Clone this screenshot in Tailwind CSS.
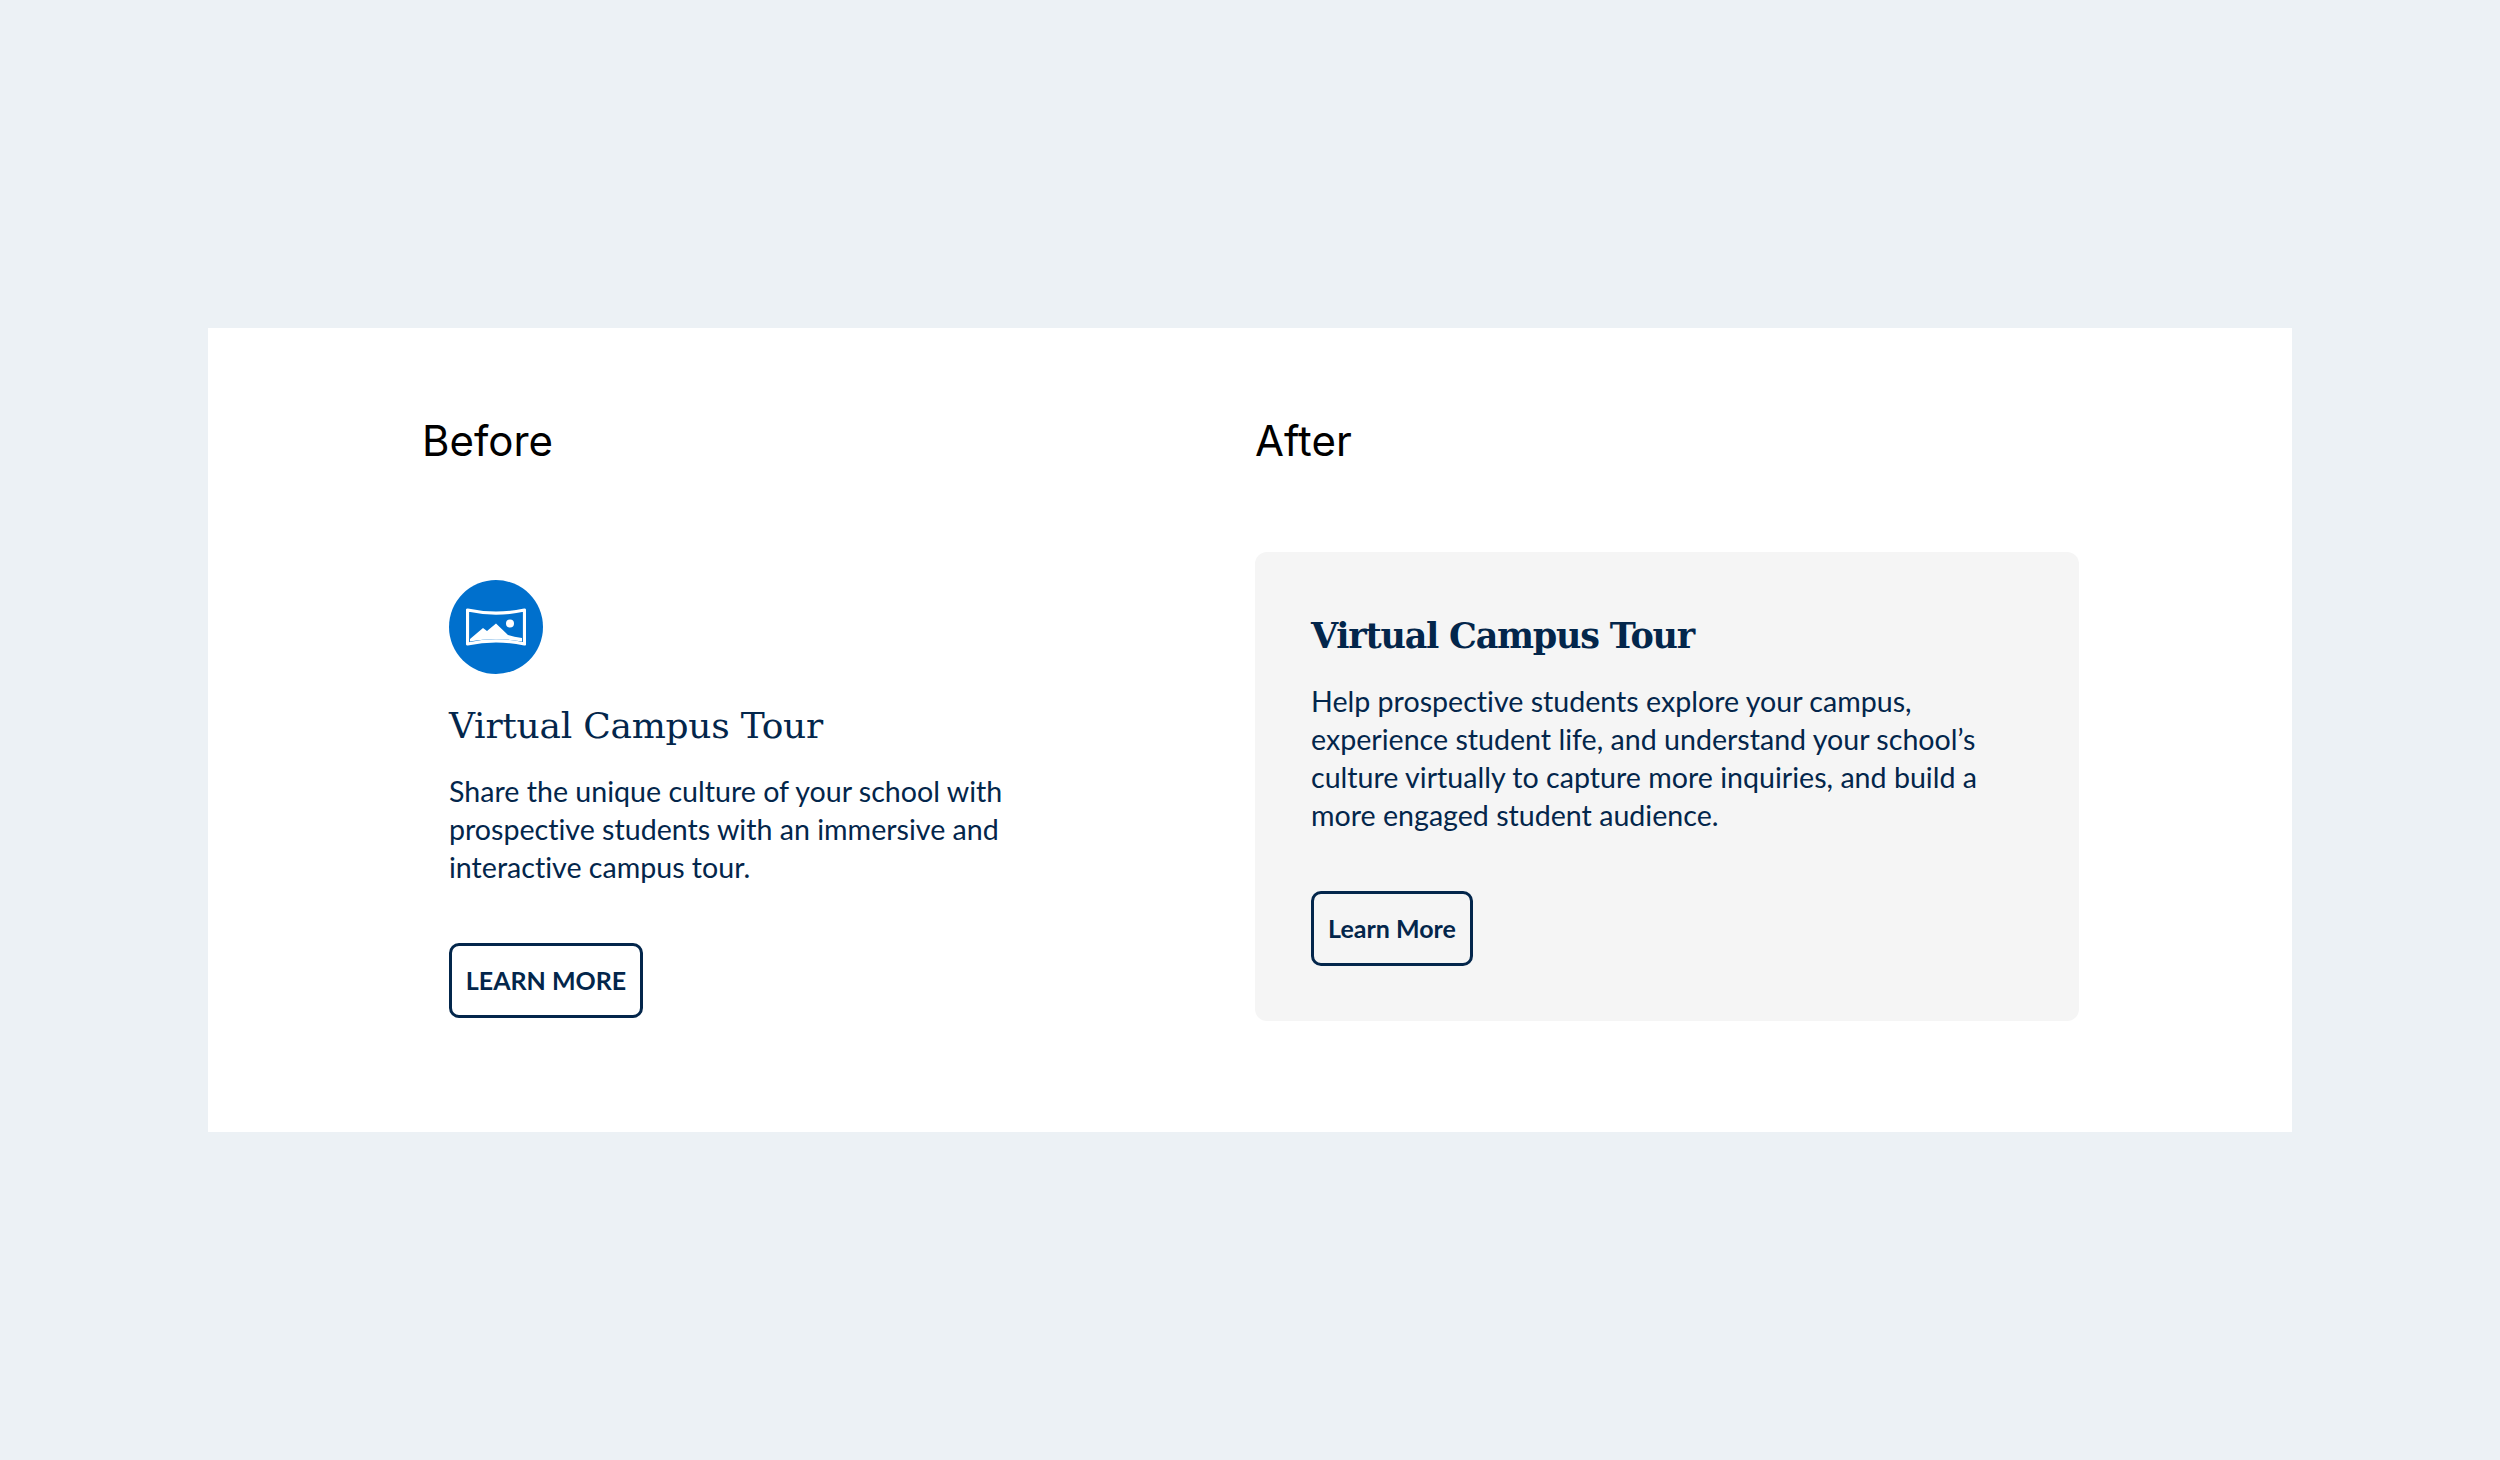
<!DOCTYPE html>
<html lang="en">
<head>
  <meta charset="UTF-8" />
  <title>Before and After</title>
  <script src="https://cdn.jsdelivr.net/npm/@tailwindcss/browser@4"></script>
</head>
<body class="bg-[#ecf1f5] h-[1460px] overflow-hidden font-['Lato',sans-serif] text-[#03264b] [font-variant-ligatures:none]">
  <main class="mt-[328px] ml-[208px] w-[2084px] h-[804px] bg-white pl-[214px] pt-[88px] grid grid-cols-[833px_824px]">

    <!-- Before -->
    <section>
      <h2 class="font-['Inter',sans-serif] text-[42px] leading-[50px] text-black">Before</h2>
      <div class="ml-[27px] mt-[114px]">
        <div class="w-[94px] h-[94px] rounded-full bg-[#0070cd] flex items-center justify-center">
          <svg class="w-[60px] h-[38px]" viewBox="0 0 60 38" fill="none">
            <path d="M1.5 2C20 6 40 6 58.5 2V36C40 32 20 32 1.5 36Z" stroke="white" stroke-width="3.200" stroke-linejoin="round"/>
            <path d="M4 31L17 20L21 23L30 15.500L42 27Q48 29 56 30V33.500C40 30.500 20 30.500 4 33.500Z" fill="white"/>
            <circle cx="44" cy="15.500" r="4" fill="white"/>
          </svg>
        </div>
        <h3 class="mt-[29px] font-['DejaVu_Serif',serif] text-[36px] tracking-[-0.25px] leading-[46px]">Virtual Campus Tour</h3>
        <p class="mt-[23px] text-[28.6px] leading-[38px] w-[600px]">Share the unique culture of your school with prospective students with an immersive and interactive campus tour.</p>
        <a href="#" class="mt-[57px] inline-flex items-center h-[75px] w-[194px] justify-center border-[3px] border-[#03264b] rounded-[10px] text-[25px] font-bold">LEARN MORE</a>
      </div>
    </section>

    <!-- After -->
    <section>
      <h2 class="font-['Inter',sans-serif] text-[42px] leading-[50px] text-black">After</h2>
      <div class="mt-[86px] h-[469px] bg-[#f5f5f5] rounded-[12px] p-[56px]">
        <h3 class="mt-[5px] font-['DejaVu_Serif',serif] font-bold text-[35px] tracking-[-1.25px] leading-[46px]">Virtual Campus Tour</h3>
        <p class="mt-[23px] text-[28.6px] leading-[38px] w-[700px]">Help prospective students explore your campus, experience student life, and understand your school’s culture virtually to capture more inquiries, and build a more engaged student audience.</p>
        <a href="#" class="mt-[57px] inline-flex items-center h-[75px] w-[162px] justify-center border-[3px] border-[#03264b] rounded-[10px] text-[25px] font-bold">Learn More</a>
      </div>
    </section>
  </main>
</body>
</html>
